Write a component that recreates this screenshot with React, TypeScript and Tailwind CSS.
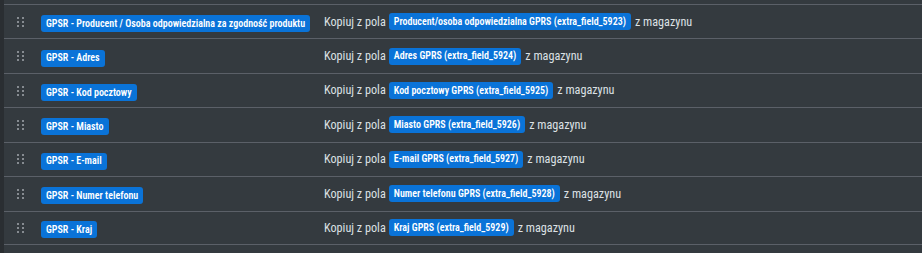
import React from "react";

const rows = [
  { name: "GPSR - Producent / Osoba odpowiedzialna za zgodność produktu", field: "Producent/osoba odpowiedzialna GPRS (extra_field_5923)" },
  { name: "GPSR - Adres", field: "Adres GPRS (extra_field_5924)" },
  { name: "GPSR - Kod pocztowy", field: "Kod pocztowy GPRS (extra_field_5925)" },
  { name: "GPSR - Miasto", field: "Miasto GPRS (extra_field_5926)" },
  { name: "GPSR - E-mail", field: "E-mail GPRS (extra_field_5927)" },
  { name: "GPSR - Numer telefonu", field: "Numer telefonu GPRS (extra_field_5928)" },
  { name: "GPSR - Kraj", field: "Kraj GPRS (extra_field_5929)" },
];

const Grip: React.FC = () => (
  <svg width="7" height="10" viewBox="0 0 7 10" className="fill-[#868b91]">
    <rect x="0" y="0" width="2" height="2" />
    <rect x="5" y="0" width="2" height="2" />
    <rect x="0" y="4" width="2" height="2" />
    <rect x="5" y="4" width="2" height="2" />
    <rect x="0" y="8" width="2" height="2" />
    <rect x="5" y="8" width="2" height="2" />
  </svg>
);

const Badge: React.FC<{ children: React.ReactNode }> = ({ children }) => (
  <span className="inline-flex items-center h-[17px] px-[5px] rounded-[3px] bg-[#0a73d8] text-white text-[10px] font-semibold leading-none whitespace-nowrap">
    {children}
  </span>
);

const App: React.FC = () => {
  return (
    <div className="w-[922px] h-[253px] bg-[#343a3f] border-l-4 border-[#2a2e32] pt-[4px] overflow-hidden font-['Roboto_Condensed','Liberation_Sans_Narrow',sans-serif]">
      {rows.map((row, idx) => (
        <div
          key={row.name}
          className={`flex items-center h-[34.43px] border-t border-[#5b6068] ${idx === rows.length - 1 ? "border-b" : ""}`}
        >
          <div className="w-[37px] pl-[13px] flex items-center">
            <Grip />
          </div>
          <div className="w-[283px] shrink-0">
            <Badge>{row.name}</Badge>
          </div>
          <div className="flex items-center text-[12.2px] text-[#dde1e5] whitespace-nowrap">
            <span className="mr-[3px]">Kopiuj z pola</span>
            <Badge>{row.field}</Badge>
            <span className="ml-[4px]">z magazynu</span>
          </div>
        </div>
      ))}
    </div>
  );
};

export default App;
